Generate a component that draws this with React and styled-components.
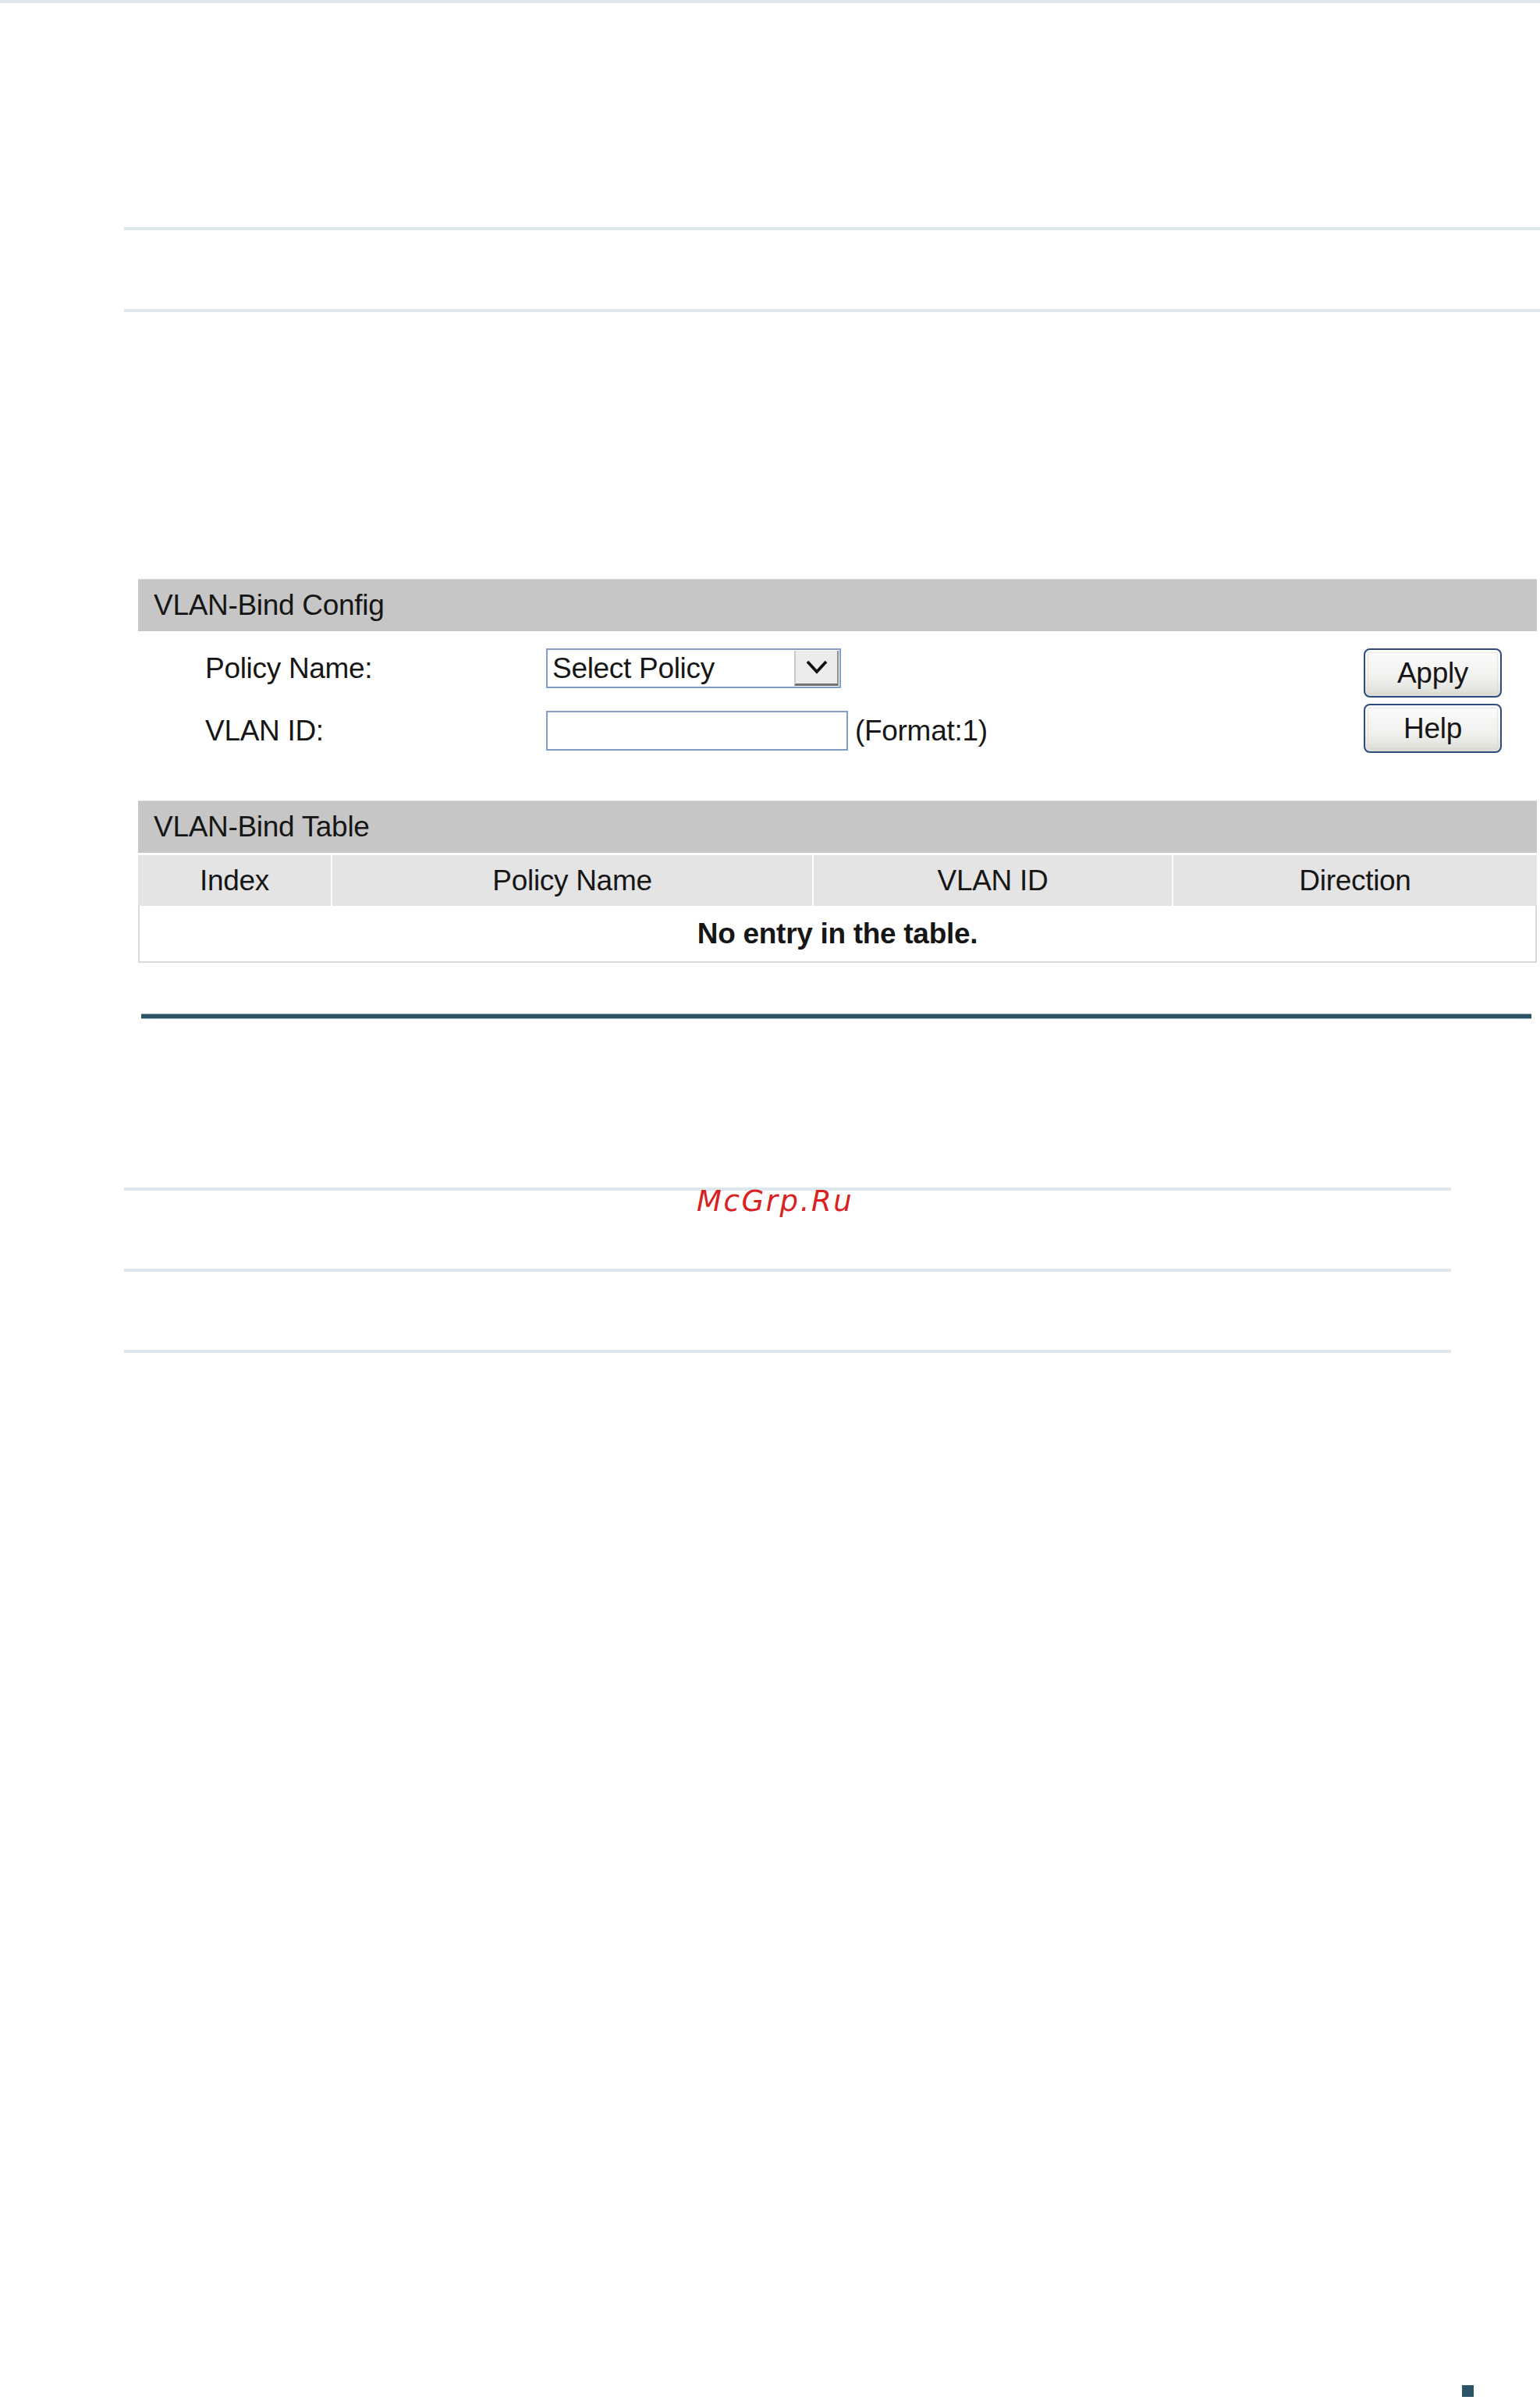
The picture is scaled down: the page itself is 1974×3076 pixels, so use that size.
import React from 'react';
import styled, { createGlobalStyle } from 'styled-components';

const GlobalStyle = createGlobalStyle`
  body {
    margin: 0;
    background: #ffffff;
    font-family: "Liberation Sans", Arial, sans-serif;
  }
`;

const Page = styled.div`
  width: 1974px;
  min-height: 3076px;
  display: flex;
  flex-direction: column;
  color: #161616;
`;

const Rule = styled.div`
  height: 4px;
  background: #dde8ec;
  margin-top: ${(p) => p.$top || 0}px;
  margin-left: ${(p) => p.$left || 0}px;
  width: ${(p) => p.$width}px;
`;

const Panel = styled.section`
  margin-top: 342px;
  margin-left: 177px;
  width: 1793px;
  font-size: 37px;
`;

const SectionHead = styled.div`
  height: 67px;
  background: #c6c6c6;
  border-top: 1px solid #d6d6d6;
  box-sizing: border-box;
  display: flex;
  align-items: center;
  padding-left: 20px;
  letter-spacing: -0.3px;
`;

const Form = styled.div`
  height: 217px;
  box-sizing: border-box;
  padding: 22px 45px 0 86px;
  display: flex;
  justify-content: space-between;
  align-items: flex-start;
`;

const Fields = styled.div`
  display: grid;
  grid-template-columns: 437px auto;
  row-gap: 29px;
  align-items: center;
`;

const Label = styled.div`
  letter-spacing: -0.3px;
`;

const Control = styled.div`
  display: flex;
  align-items: center;
  gap: 9px;
`;

const Select = styled.div`
  width: 378px;
  height: 51px;
  box-sizing: border-box;
  border: 2px solid #7f9fc7;
  display: flex;
  align-items: center;
  justify-content: space-between;
  padding-left: 6px;
  background: #fff;
`;

const SelectText = styled.span`
  letter-spacing: -0.3px;
`;

const DropButton = styled.div`
  width: 57px;
  height: 45px;
  box-sizing: border-box;
  margin-right: 1px;
  background: #ececec;
  border-left: 2px solid #c9c9c9;
  border-bottom: 3px solid #6f6f6f;
  border-right: 2px solid #8f8f8f;
  display: flex;
  align-items: center;
  justify-content: center;
`;

const TextInput = styled.div`
  width: 387px;
  height: 51px;
  box-sizing: border-box;
  border: 2px solid #7f9fc7;
  background: #fff;
`;

const Hint = styled.span`
  letter-spacing: -0.3px;
`;

const Buttons = styled.div`
  display: flex;
  flex-direction: column;
  gap: 8px;
`;

const Button = styled.button`
  width: 177px;
  height: 63px;
  box-sizing: border-box;
  border: 2px solid #2e4d7e;
  border-radius: 8px;
  background: linear-gradient(#fbfbfb, #f1f1ef 60%, #dcdcd6);
  outline: 1px dotted #d2d2bc;
  outline-offset: -6px;
  font-family: "Liberation Sans", Arial, sans-serif;
  font-size: 37px;
  color: #161616;
  letter-spacing: -0.3px;
  padding: 0;
`;

const Grid = styled.div`
  display: grid;
  grid-template-columns: 247px 615px 459px 466px;
  column-gap: 2px;
  margin-top: 3px;
`;

const HeadCell = styled.div`
  height: 65px;
  background: #e4e4e4;
  display: flex;
  align-items: center;
  justify-content: center;
  letter-spacing: -0.3px;
`;

const EmptyRow = styled.div`
  grid-column: 1 / -1;
  height: 73px;
  box-sizing: border-box;
  border: 2px solid #dadada;
  border-top: none;
  display: flex;
  align-items: center;
  justify-content: center;
  font-weight: bold;
  letter-spacing: -0.3px;
`;

const DarkRule = styled.div`
  margin-top: 65px;
  margin-left: 181px;
  width: 1782px;
  height: 7px;
  box-sizing: border-box;
  background: #2b5366;
  border-top: 1px solid #94adb8;
  border-bottom: 1px solid #94adb8;
`;

const Lower = styled.div`
  position: relative;
  margin-top: 216px;
  margin-left: 159px;
  display: flex;
  flex-direction: column;
  gap: 100px;
`;

const Watermark = styled.span`
  position: absolute;
  left: 734px;
  top: -1px;
  font-family: "DejaVu Sans", sans-serif;
  font-style: italic;
  font-size: 37px;
  line-height: 37px;
  letter-spacing: 2.6px;
  color: #d82222;
`;

const Footer = styled.div`
  margin-top: auto;
  display: flex;
  justify-content: flex-end;
  padding: 0 85px 4px 0;
`;

const Mark = styled.div`
  width: 15px;
  height: 15px;
  background: #2c5366;
`;

const Chevron = () => (
  <svg width="28" height="20" viewBox="0 0 28 20">
    <polyline points="2,3 14,16 26,3" fill="none" stroke="#111" strokeWidth="3.8" />
  </svg>
);

const columns = ['Index', 'Policy Name', 'VLAN ID', 'Direction'];

export default function App() {
  return (
    <Page>
      <GlobalStyle />
      <Rule $width={1974} />
      <Rule $top={287} $left={159} $width={1815} />
      <Rule $top={101} $left={159} $width={1815} />

      <Panel>
        <SectionHead>VLAN-Bind Config</SectionHead>
        <Form>
          <Fields>
            <Label>Policy Name:</Label>
            <Control>
              <Select>
                <SelectText>Select Policy</SelectText>
                <DropButton>
                  <Chevron />
                </DropButton>
              </Select>
            </Control>
            <Label>VLAN ID:</Label>
            <Control>
              <TextInput />
              <Hint>(Format:1)</Hint>
            </Control>
          </Fields>
          <Buttons>
            <Button>Apply</Button>
            <Button>Help</Button>
          </Buttons>
        </Form>

        <SectionHead>VLAN-Bind Table</SectionHead>
        <Grid>
          {columns.map((c) => (
            <HeadCell key={c}>{c}</HeadCell>
          ))}
          <EmptyRow>No entry in the table.</EmptyRow>
        </Grid>
      </Panel>

      <DarkRule />

      <Lower>
        <Rule $width={1701} />
        <Rule $width={1701} />
        <Rule $width={1701} />
        <Watermark>McGrp.Ru</Watermark>
      </Lower>

      <Footer>
        <Mark />
      </Footer>
    </Page>
  );
}
